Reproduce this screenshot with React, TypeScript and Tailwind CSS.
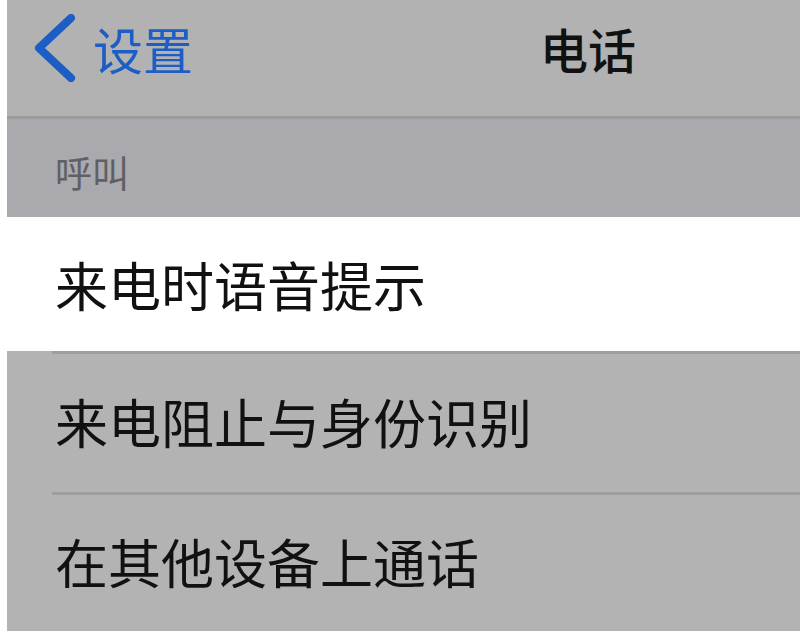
import { ReactNode } from "react";

const font = { fontFamily: '"Noto Sans CJK SC", "Noto Sans", sans-serif' };

function Row({ children, white, divider }: { children: ReactNode; white?: boolean; divider?: boolean }) {
  return (
    <div className={`relative flex items-center pl-[48px] ${white ? "bg-white" : "bg-[#b3b3b3]"}`}>
      {divider && <div className="absolute top-0 left-[45px] right-0 h-[3px] bg-[#9e9e9e]" />}
      <span className="text-[53px] leading-none text-[#111]">{children}</span>
    </div>
  );
}

export default function App() {
  return (
    <div className="w-[800px] h-[631px] overflow-hidden bg-white" style={font}>
      <div className="ml-[7px] flex flex-col h-full">
        {/* Nav bar */}
        <div className="h-[119px] shrink-0 flex items-center bg-[#b2b2b2] border-b-[3px] border-[#9b9b9b] relative">
          <div className="flex items-center pl-[26px] pb-[20px]">
            <svg width="44" height="68" viewBox="0 0 44 68" className="mr-[16px]">
              <polyline
                points="38,4 6,34 38,64"
                fill="none"
                stroke="#1c5ec6"
                strokeWidth="8"
                strokeLinecap="round"
                strokeLinejoin="round"
              />
            </svg>
            <span className="text-[50px] leading-none text-[#1c5ec6]">设置</span>
          </div>
          <span className="absolute left-[533px] top-[24px] text-[48px] leading-none font-medium text-[#111]">电话</span>
        </div>

        {/* Section header */}
        <div className="h-[98px] shrink-0 flex items-center pl-[48px] pt-[8px] bg-[#a9a9ae]">
          <span className="text-[37px] leading-none text-[#5f5f64]">呼叫</span>
        </div>

        <div className="flex-1 grid grid-rows-[134px_141px_1fr]">
          <Row white>来电时语音提示</Row>
          <Row divider>来电阻止与身份识别</Row>
          <Row divider>在其他设备上通话</Row>
        </div>
      </div>
    </div>
  );
}
